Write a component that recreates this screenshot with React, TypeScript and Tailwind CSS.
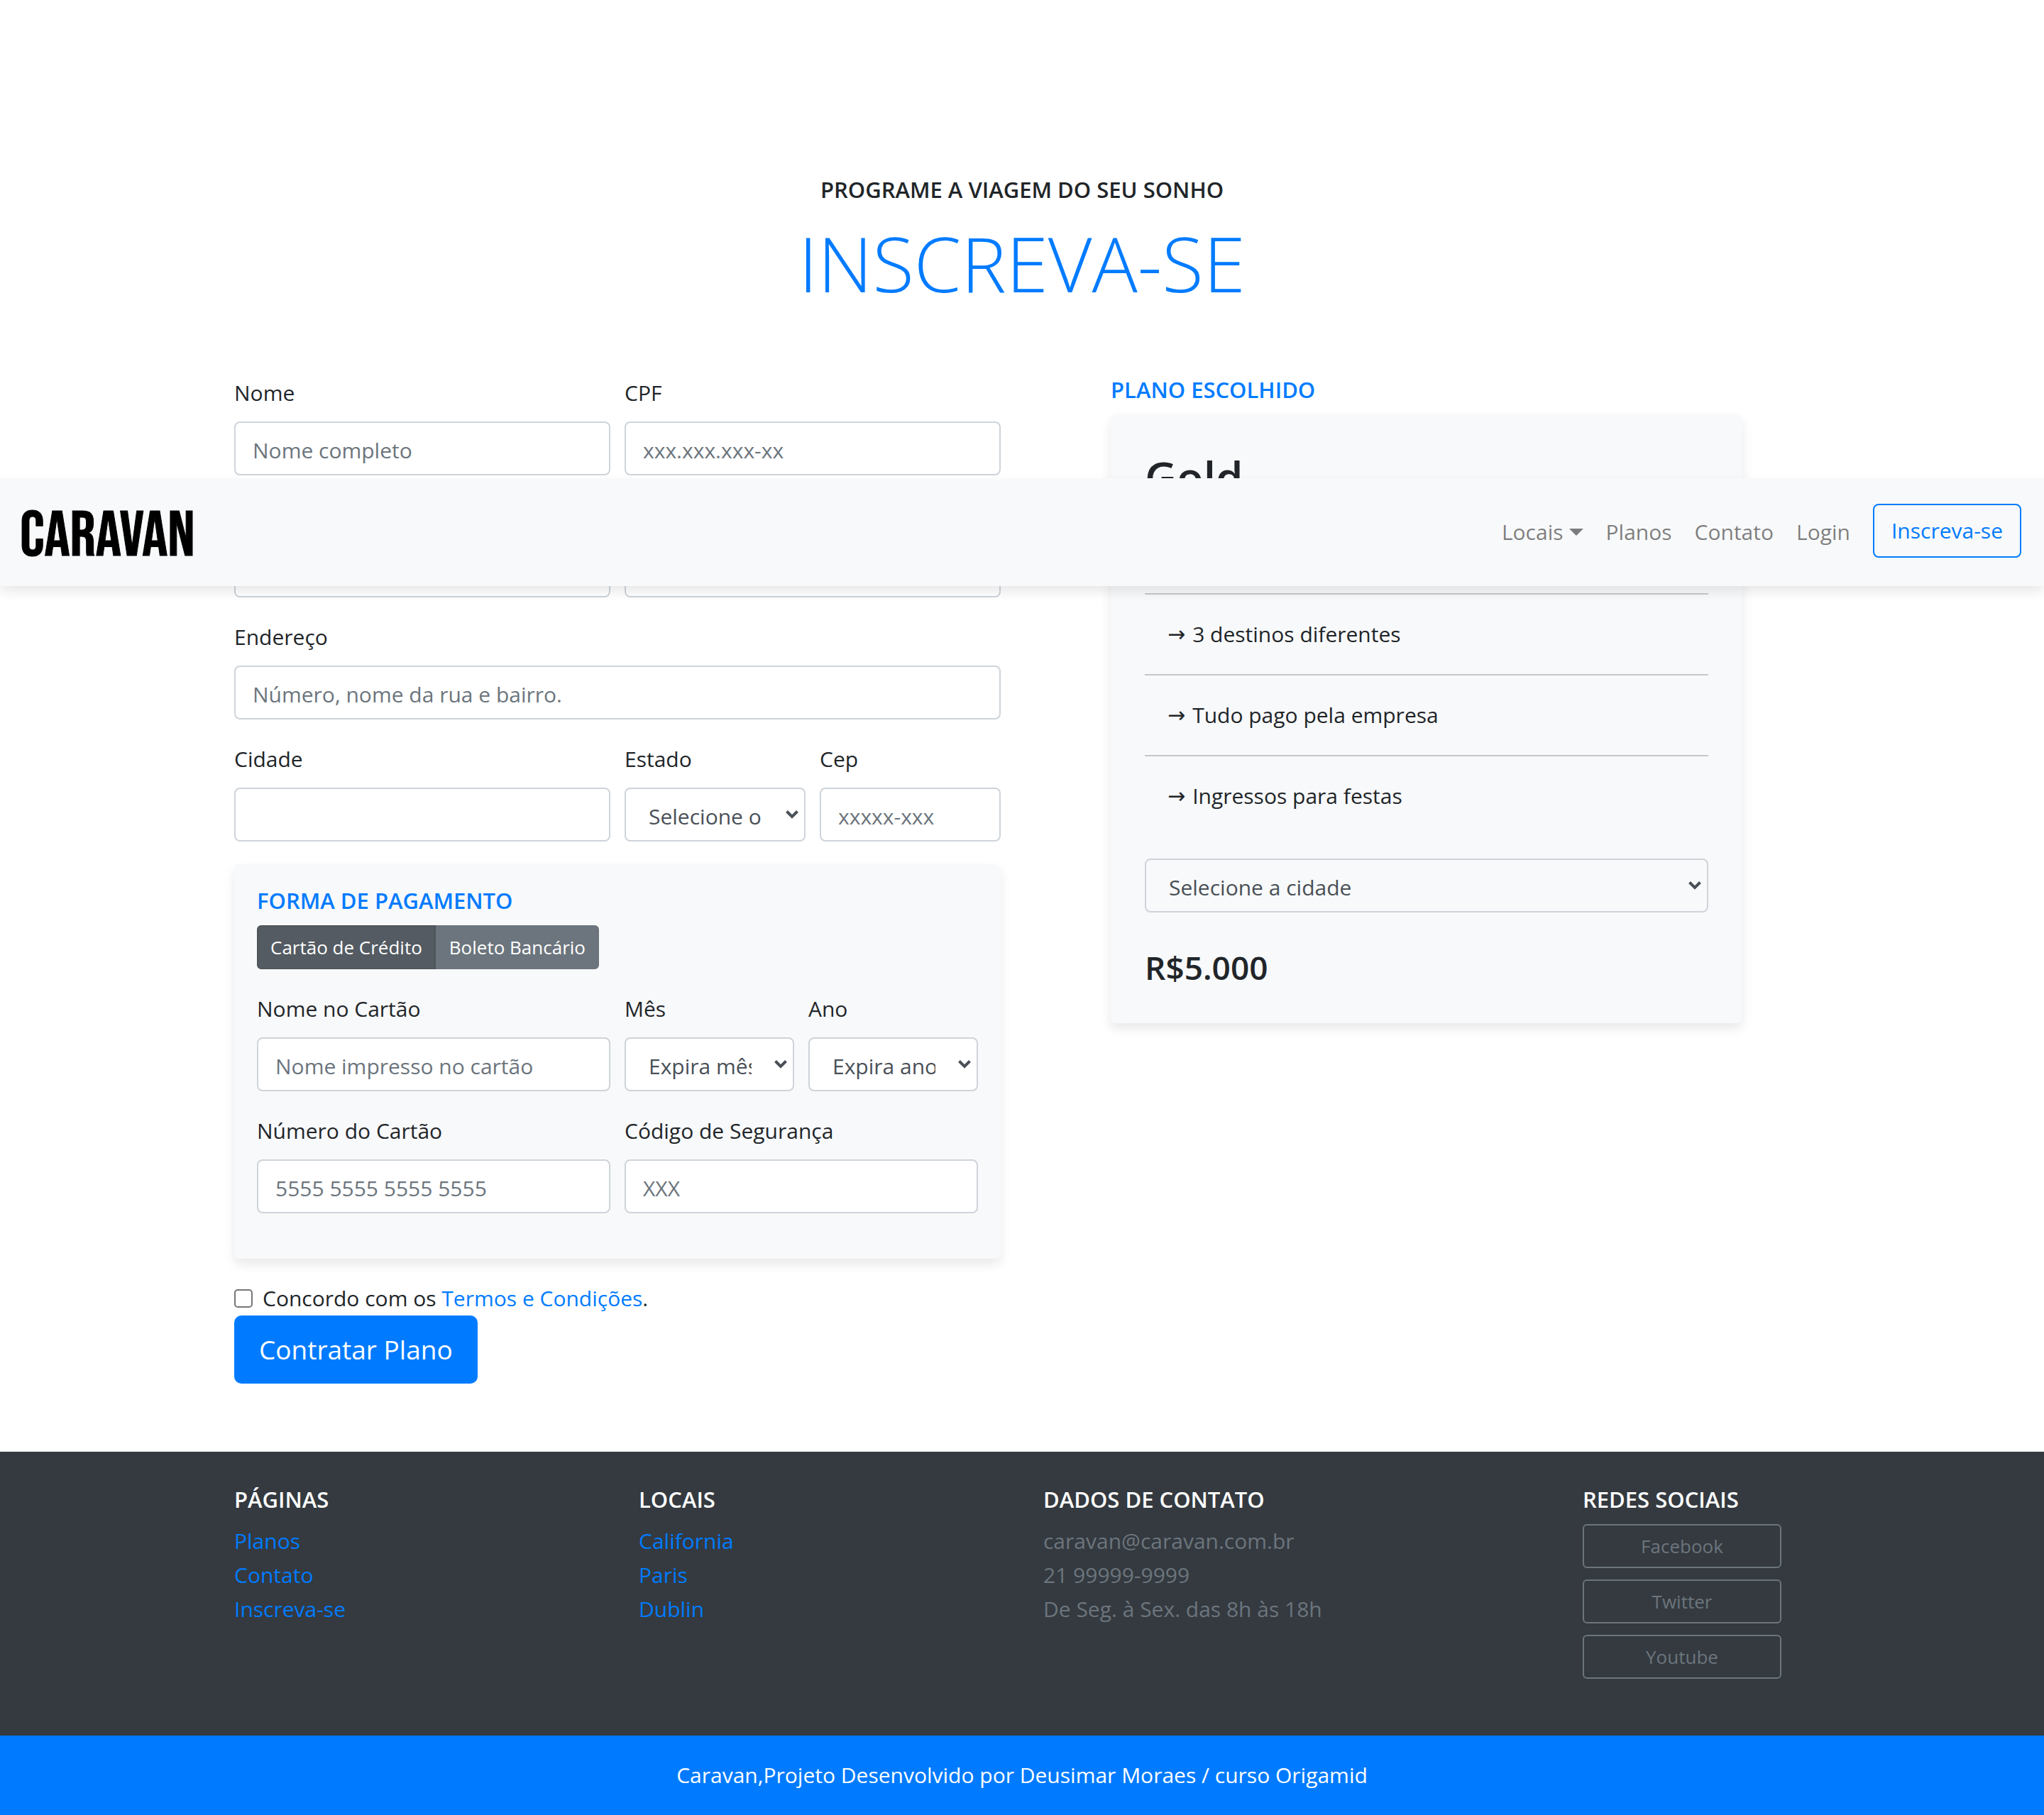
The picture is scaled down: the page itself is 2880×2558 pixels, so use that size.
import type { ReactNode } from "react";

const fieldBase =
  "block h-[76px] w-full rounded-lg border-2 border-[#ced4da] pt-1 text-[30px] text-[#495057] outline-none focus:border-[#80bdff]";
const cardShadow = "shadow-[0_8px_16px_rgba(0,0,0,0.09)]";

function Label({ id, children }: { id: string; children: ReactNode }) {
  return (
    <label htmlFor={id} className="mb-4 block leading-[48px]">
      {children}
    </label>
  );
}

function TextField({
  id,
  label,
  placeholder,
  type = "text",
  className = "",
}: {
  id: string;
  label: string;
  placeholder?: string;
  type?: string;
  className?: string;
}) {
  return (
    <div className={className}>
      <Label id={id}>{label}</Label>
      <input
        id={id}
        type={type}
        placeholder={placeholder}
        className={`${fieldBase} bg-white px-6 placeholder:text-[#6c757d]`}
      />
    </div>
  );
}

function Select({
  id,
  option,
  ariaLabel,
  background = "bg-white",
}: {
  id: string;
  option: string;
  ariaLabel?: string;
  background?: string;
}) {
  return (
    <div className="relative">
      <select
        id={id}
        aria-label={ariaLabel}
        className={`${fieldBase} ${background} appearance-none pr-[58px] pl-8`}
      >
        <option>{option}</option>
      </select>
      <svg
        viewBox="0 0 18 12"
        fill="none"
        aria-hidden="true"
        className="pointer-events-none absolute top-8 right-2.5 h-3 w-[18px] text-[#495057]"
      >
        <path d="M1.5 1.5 9 9l7.500-7.500" stroke="currentColor" strokeWidth="4" />
      </svg>
    </div>
  );
}

function SelectField({ id, label, option }: { id: string; label: string; option: string }) {
  return (
    <div>
      <Label id={id}>{label}</Label>
      <Select id={id} option={option} />
    </div>
  );
}

function Subtitle({ className = "", children }: { className?: string; children: ReactNode }) {
  return (
    <h2 className={`mb-4 text-[31px] leading-[38px] font-semibold uppercase ${className}`}>
      {children}
    </h2>
  );
}

function Navbar() {
  return (
    <nav
      className={`absolute inset-x-0 top-[674px] z-10 flex items-start justify-between bg-[#f8f9fa] pt-9 pr-8 pb-6 pl-7 ${cardShadow}`}
    >
      <a
        href="#"
        className="font-['Bebas_Neue','Oswald',sans-serif] text-[90px] leading-[92px] text-black [-webkit-text-stroke:1px_black]"
      >
        CARAVAN
      </a>
      <ul className="flex items-start gap-8 leading-[48px] text-black/50">
        <li className="py-4">
          <a href="#" className="flex items-center gap-2">
            Locais
            <svg viewBox="0 0 20 10" aria-hidden="true" className="h-2.5 w-5 fill-current">
              <path d="M0 0h20L10 10z" />
            </svg>
          </a>
        </li>
        <li className="py-4">
          <a href="#">Planos</a>
        </li>
        <li className="py-4">
          <a href="#">Contato</a>
        </li>
        <li className="py-4">
          <a href="#">Login</a>
        </li>
        <li>
          <a
            href="#"
            className="block rounded-lg border-2 border-[#007bff] px-6 py-3 text-[#007bff]"
          >
            Inscreva-se
          </a>
        </li>
      </ul>
    </nav>
  );
}

function PaymentCard() {
  return (
    <section className={`mb-8 rounded-lg bg-[#f8f9fa] p-8 pb-16 ${cardShadow}`}>
      <Subtitle className="text-[#007bff]">Forma de Pagamento</Subtitle>
      <div className="mb-8 flex text-[26px] text-white">
        <button
          type="button"
          className="h-[62px] rounded-l-md border-2 border-[#4e555b] bg-[#545b62] px-[17px]"
        >
          Cartão de Crédito
        </button>
        <button
          type="button"
          className="h-[62px] rounded-r-md border-2 border-[#6c757d] bg-[#6c757d] px-[17px]"
        >
          Boleto Bancário
        </button>
      </div>
      <div className="grid grid-cols-4 gap-x-5 gap-y-8">
        <TextField
          id="nomecartao"
          label="Nome no Cartão"
          placeholder="Nome impresso no cartão"
          className="col-span-2"
        />
        <SelectField id="mes" label="Mês" option="Expira mês" />
        <SelectField id="ano" label="Ano" option="Expira ano" />
        <TextField
          id="numerocartao"
          label="Número do Cartão"
          placeholder="5555 5555 5555 5555"
          className="col-span-2"
        />
        <TextField
          id="codigo"
          label="Código de Segurança"
          placeholder="XXX"
          className="col-span-2"
        />
      </div>
    </section>
  );
}

function SignupForm() {
  return (
    <form className="w-1/2 px-[30px]">
      <div className="mb-8 grid grid-cols-4 gap-x-5 gap-y-8">
        <TextField id="nome" label="Nome" placeholder="Nome completo" className="col-span-2" />
        <TextField id="cpf" label="CPF" placeholder="xxx.xxx.xxx-xx" className="col-span-2" />
        <TextField id="email" label="Email" type="email" className="col-span-2" />
        <TextField id="senha" label="Senha" type="password" className="col-span-2" />
        <TextField
          id="endereco"
          label="Endereço"
          placeholder="Número, nome da rua e bairro."
          className="col-span-4"
        />
        <TextField id="cidade" label="Cidade" className="col-span-2" />
        <SelectField id="estado" label="Estado" option="Selecione o estado" />
        <TextField id="cep" label="Cep" placeholder="xxxxx-xxx" />
      </div>
      <PaymentCard />
      <div className="flex items-center leading-[48px]">
        <input
          id="termos"
          type="checkbox"
          className="mr-3.5 size-[26px] appearance-none rounded-[5px] border-2 border-[#767676] bg-white checked:border-[#007bff] checked:bg-[#007bff]"
        />
        <label htmlFor="termos">
          Concordo com os{" "}
          <a href="#" className="text-[#007bff]">
            Termos e Condições
          </a>
          .
        </label>
      </div>
      <button
        type="submit"
        className="block h-24 rounded-[10px] bg-[#007bff] px-[35px] text-[37px] text-white"
      >
        Contratar Plano
      </button>
    </form>
  );
}

const benefits = [
  "Hospedagem inclusa",
  "3 destinos diferentes",
  "Tudo pago pela empresa",
  "Ingressos para festas",
];

function PlanCard() {
  return (
    <aside className="mx-auto w-5/12 px-[30px]">
      <Subtitle className="text-[#007bff]">Plano Escolhido</Subtitle>
      <div className={`rounded-lg bg-[#f8f9fa] px-12 pt-12 pb-[50px] ${cardShadow}`}>
        <h3 className="mb-3 text-[62px] leading-[80px] font-semibold">Gold</h3>
        <ul className="mb-8 divide-y-2 divide-[#c6c7c8] leading-[48px]">
          {benefits.map((benefit) => (
            <li key={benefit} className="flex gap-2.5 px-8 py-8">
              <span className="font-['DejaVu_Sans'] text-[30px]">→</span>
              {benefit}
            </li>
          ))}
        </ul>
        <Select
          id="destino"
          option="Selecione a cidade"
          ariaLabel="Selecione a cidade"
          background="bg-[#f8f9fa]"
        />
        <p className="mt-12 text-[46px] leading-[58px] font-semibold">R$5.000</p>
      </div>
    </aside>
  );
}

function LinkList({ title, links }: { title: string; links: string[] }) {
  return (
    <div className="w-1/4 px-[30px]">
      <Subtitle>{title}</Subtitle>
      <ul className="leading-[48px] text-[#007bff]">
        {links.map((link) => (
          <li key={link}>
            <a href="#">{link}</a>
          </li>
        ))}
      </ul>
    </div>
  );
}

function Footer() {
  return (
    <footer className="text-white">
      <div className="bg-[#343a40] pt-12 pb-20">
        <div className="mx-auto flex max-w-[2280px]">
          <LinkList title="Páginas" links={["Planos", "Contato", "Inscreva-se"]} />
          <LinkList title="Locais" links={["California", "Paris", "Dublin"]} />
          <div className="w-1/3 px-[30px]">
            <Subtitle>Dados de Contato</Subtitle>
            <ul className="leading-[48px] text-[#6c757d]">
              <li>caravan@caravan.com.br</li>
              <li>21 99999-9999</li>
              <li>De Seg. à Sex. das 8h às 18h</li>
            </ul>
          </div>
          <div className="w-1/6 pl-[30px]">
            <Subtitle>Redes Sociais</Subtitle>
            <div className="flex w-[280px] flex-col gap-4 text-center text-[26px] leading-[58px] text-[#6c757d]">
              {["Facebook", "Twitter", "Youtube"].map((name) => (
                <a key={name} href="#" className="rounded-md border-2 border-[#6c757d]">
                  {name}
                </a>
              ))}
            </div>
          </div>
        </div>
      </div>
      <p className="bg-[#007bff] py-8 text-center leading-[48px]">
        Caravan,Projeto Desenvolvido por Deusimar Moraes / curso Origamid
      </p>
    </footer>
  );
}

export default function App() {
  return (
    <div className="relative bg-white font-['Open_Sans','Noto_Sans',sans-serif] text-[30px] text-[#212529]">
      <Navbar />
      <main className="mx-auto max-w-[2280px] pt-[248px] pb-24">
        <header className="mb-[90px] text-center">
          <Subtitle>Programe a viagem do seu sonho</Subtitle>
          <h1 className="text-[107px] leading-[138px] font-light text-[#007bff]">INSCREVA-SE</h1>
        </header>
        <div className="flex items-start">
          <SignupForm />
          <PlanCard />
        </div>
      </main>
      <Footer />
    </div>
  );
}
